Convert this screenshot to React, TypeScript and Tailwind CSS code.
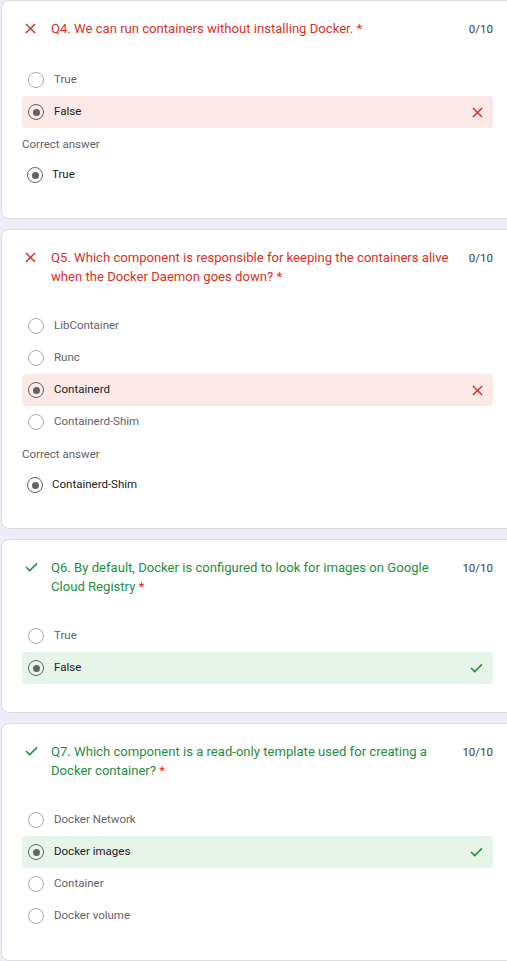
import type { ReactNode } from 'react';

type Option = { label: string; selected?: boolean };

type Question = {
  id: string;
  title: string;
  correct: boolean;
  points: string;
  options: Option[];
  answer?: string;
};

const questions: Question[] = [
  {
    id: 'q4',
    title: 'Q4. We can run containers without installing Docker.',
    correct: false,
    points: '0/10',
    options: [{ label: 'True' }, { label: 'False', selected: true }],
    answer: 'True',
  },
  {
    id: 'q5',
    title: 'Q5. Which component is responsible for keeping the containers alive when the Docker Daemon goes down?',
    correct: false,
    points: '0/10',
    options: [
      { label: 'LibContainer' },
      { label: 'Runc' },
      { label: 'Containerd', selected: true },
      { label: 'Containerd-Shim' },
    ],
    answer: 'Containerd-Shim',
  },
  {
    id: 'q6',
    title: 'Q6. By default, Docker is configured to look for images on Google Cloud Registry',
    correct: true,
    points: '10/10',
    options: [{ label: 'True' }, { label: 'False', selected: true }],
  },
  {
    id: 'q7',
    title: 'Q7. Which component is a read-only template used for creating a Docker container?',
    correct: true,
    points: '10/10',
    options: [
      { label: 'Docker Network' },
      { label: 'Docker images', selected: true },
      { label: 'Container' },
      { label: 'Docker volume' },
    ],
  },
];

function CrossIcon({ className }: { className?: string }) {
  return (
    <svg viewBox="0 0 12 12" className={className} fill="none" stroke="currentColor" strokeWidth="1.6">
      <path d="M1 1 L11 11 M11 1 L1 11" />
    </svg>
  );
}

function CheckIcon({ className }: { className?: string }) {
  return (
    <svg viewBox="0 0 14 11" className={className} fill="none" stroke="currentColor" strokeWidth="1.6">
      <path d="M1 5.5 L5 9.5 L13 1.5" />
    </svg>
  );
}

function Radio({ checked }: { checked?: boolean }) {
  return checked ? (
    <span className="w-4 h-4 rounded-full border-[1.5px] border-[#5f6368] flex items-center justify-center shrink-0">
      <span className="w-[7px] h-[7px] rounded-full bg-[#5f6368]" />
    </span>
  ) : (
    <span className="w-4 h-4 rounded-full border-[1.5px] border-[#a7abb0] shrink-0" />
  );
}

function Card({ children, loose }: { children: ReactNode; loose?: boolean }) {
  return (
    <div
      className={`ml-[1px] w-[530px] bg-white border border-[#dadce0] rounded-lg pt-[18px] ${
        loose ? 'pb-[28px]' : 'pb-[27px]'
      }`}
    >
      <div className="ml-[20px] w-[471px]">{children}</div>
    </div>
  );
}

function QuestionCard({ q }: { q: Question }) {
  const tone = q.correct ? 'text-[#1e8e3e]' : 'text-[#d93025]';
  return (
    <Card loose={!q.answer}>
      <div className="flex items-start min-h-[21px]">
        <div className="w-[29px] shrink-0 pt-[4px] pl-[3px]">
          {q.correct ? (
            <CheckIcon className={`w-[13px] h-[10px] ${tone}`} />
          ) : (
            <CrossIcon className={`w-[11px] h-[11px] ${tone}`} />
          )}
        </div>
        <p className={`flex-1 text-[13.1px] leading-[19px] ${tone}`}>
          {q.title} <span className="text-[#d93025]">*</span>
        </p>
        <span className="ml-[6px] pt-[1px] text-[11.5px] leading-[19px] text-[#3c4043] text-right">
          {q.points}
        </span>
      </div>

      <div className="mt-[24px] flex flex-col">
        {q.options.map((o) => {
          const highlight = o.selected ? (q.correct ? 'bg-[#e6f4ea]' : 'bg-[#fce8e6]') : '';
          return (
            <div key={o.label} className={`h-8 flex items-center pl-[6px] pr-[10px] rounded-[4px] ${highlight}`}>
              <Radio checked={o.selected} />
              <span
                className={`ml-[10px] flex-1 text-[11.5px] ${o.selected ? 'text-[#202124]' : 'text-[#5f6368]'}`}
              >
                {o.label}
              </span>
              {o.selected &&
                (q.correct ? (
                  <CheckIcon className="w-[13px] h-[10px] text-[#1e8e3e]" />
                ) : (
                  <CrossIcon className="w-[11px] h-[11px] text-[#d93025]" />
                ))}
            </div>
          );
        })}
      </div>

      {q.answer && (
        <>
          <p className="mt-[8px] text-[11.5px] leading-[17px] text-[#5f6368]">Correct answer</p>
          <div className="mt-[6px] h-8 flex items-center pl-[5px]">
            <Radio checked />
            <span className="ml-[9px] text-[11.5px] text-[#202124]">{q.answer}</span>
          </div>
        </>
      )}
    </Card>
  );
}

export default function App() {
  return (
    <div
      className="min-h-screen w-full overflow-hidden bg-[#f0ebf8] flex flex-col gap-[10px] pb-6"
      style={{ fontFamily: 'Roboto, "Noto Sans", Arial, sans-serif' }}
    >
      {questions.map((q) => (
        <QuestionCard key={q.id} q={q} />
      ))}
    </div>
  );
}
